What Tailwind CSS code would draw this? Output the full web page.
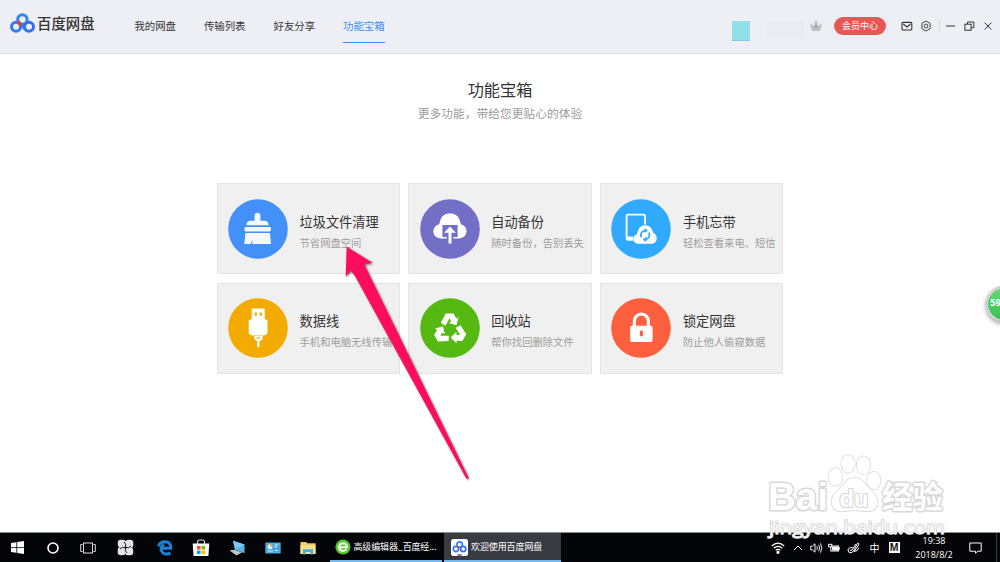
<!DOCTYPE html>
<html lang="zh-CN">
<head>
  <meta charset="UTF-8">
  <title>百度网盘</title>
  <script src="https://cdn.jsdelivr.net/npm/@tailwindcss/browser@4"></script>
</head>
<body class="relative w-[1000px] h-[562px] overflow-hidden bg-white flex flex-col font-['Noto_Sans_CJK_SC',sans-serif]">

  <!-- Header -->
  <header class="h-[54px] shrink-0 flex items-start bg-[#eeeff5] border-b border-[#dcdde1] text-[#333]">
    <div class="flex items-center pl-2.5 pt-3 w-[134px]">
      <svg class="w-[25px] h-[22px]" viewBox="0 0 25 22" fill="none" stroke-width="3">
        <circle cx="12.4" cy="7.5" r="4.7" stroke="#2f86f8"/>
        <circle cx="6" cy="14.8" r="4.5" stroke="#2f7bf7"/>
        <circle cx="19" cy="14.8" r="4.5" stroke="#2f6ff7"/>
        <path d="M9.5 11 L15.7 17.8" stroke="#2f7bf7"/>
        <path d="M7.6 9 L11.4 13.4" stroke="#d8403f"/>
      </svg>
      <span class="ml-0.5 text-[14.4px] leading-[22px] font-medium">百度网盘</span>
    </div>
    <nav class="flex gap-[28px] text-[10.4px] leading-4 pt-[17.5px] pl-[0.4px]">
      <a class="h-[25px]">我的网盘</a>
      <a class="h-[25px]">传输列表</a>
      <a class="h-[25px]">好友分享</a>
      <a class="h-[25px] text-[#3b8cff] border-b-[1.5px] border-[#3b8cff]">功能宝箱</a>
    </nav>
    <div class="flex ml-auto pr-2">
      <div class="mt-[21px] w-[18px] h-5 bg-[#91dfe9] border-b border-[#7fcbd6]"></div>
      <div class="mt-[21px] ml-[17px] w-[37px] h-[18px] bg-[#ebecf1]"></div>
      <svg class="mt-[19px] ml-1.5 w-3 h-[13px]" viewBox="0 0 12 13" fill="#bcc4c9">
        <path d="M0 4 L3.4 7 L5 3 L6 1 L7 3 L8.6 7 L12 4 L10.6 11.5 Q6 13 1.4 11.5Z"/>
        <path d="M6 5 L7 9 H5Z" fill="#8b969c"/>
      </svg>
      <div class="mt-[17px] ml-3 w-[52px] h-[18px] rounded-full bg-[#e65855] text-white text-[9px] leading-[18px] text-center">会员中心</div>
      <svg class="mt-[21px] ml-[15px] w-3 h-[11px]" viewBox="0 0 12 11" fill="none" stroke="#333" stroke-width="1.1">
        <rect x="1" y="1.4" width="9.8" height="7.6" rx="1"/>
        <path d="M2.3 3 L6 6 L9.6 3"/>
      </svg>
      <svg class="mt-[20px] ml-[7px] w-3 h-3" viewBox="0 0 12 12" fill="none" stroke="#444">
        <path d="M6 1 L10.1 3.4 V8.6 L6 11 L1.9 8.6 V3.4Z" stroke-linejoin="round"/>
        <circle cx="6" cy="6" r="1.9"/>
      </svg>
      <div class="mt-5 ml-[7px] w-px h-3 bg-[#dadbe0]"></div>
      <svg class="mt-[20px] ml-[6px] w-[9px] h-3" viewBox="0 0 9 12" stroke="#444" stroke-width="1.1"><path d="M0 6 H9"/></svg>
      <svg class="mt-[21px] ml-[9px] w-[11px] h-[11px]" viewBox="0 0 11 11" fill="none" stroke="#333">
        <rect x=".9" y="3.2" width="6.2" height="6"/>
        <path d="M3.5 3 V1 H9.8 V6.7 H7.3"/>
      </svg>
      <svg class="mt-[22px] ml-[9px] w-2 h-2" viewBox="0 0 8 8" stroke="#333"><path d="M.7 .7 L7.3 7.5 M7.3 .7 L.7 7.5"/></svg>
    </div>
  </header>

  <!-- Content -->
  <main class="grow flex flex-col items-center pt-[23px]">
    <h1 class="text-[16.2px] leading-6 text-[#333]">功能宝箱</h1>
    <p class="text-[11.75px] leading-5 mt-0.5 text-[#9b9b9b]">更多功能，带给您更贴心的体验</p>

    <div class="grid grid-cols-[repeat(3,183.5px)] gap-x-[8.2px] gap-y-[8.6px] mt-[60px]">
      <div class="flex h-[91px] bg-[#f0f0f0] border border-[#e4e4e4] rounded-[1px] pl-[10.5px] pt-[14.5px] whitespace-nowrap">
        <svg class="w-[60px] h-[60px] shrink-0" viewBox="0 0 60 60" fill="#f4f7fb">
          <circle cx="30" cy="30" r="29.8" fill="#4490f9"/>
          <path d="M26.6 16.7 a2.9 2.9 0 0 1 5.8 0 V21.7 H37 Q40.4 22 40.6 26.2 H18.4 Q18.6 22 22 21.7 H26.6Z"/>
          <rect x="16.4" y="28.1" width="26.6" height="4.4" rx="1.4"/>
          <path d="M17.4 34 H42 L43 45 H24.2 L24.6 40.5 L22.7 45 H16.3Z"/>
        </svg>
        <div class="ml-[11.5px] pt-[13px]">
          <h2 class="text-[13.2px] leading-5 text-[#333]">垃圾文件清理</h2>
          <p class="text-[10.3px] leading-4 mt-[3px] text-[#9d9d9d]">节省网盘空间</p>
        </div>
      </div>

      <div class="flex h-[91px] bg-[#f0f0f0] border border-[#e4e4e4] rounded-[1px] pl-[10.5px] pt-[14.5px] whitespace-nowrap">
        <svg class="w-[60px] h-[60px] shrink-0" viewBox="0 0 60 60" fill="#fff">
          <circle cx="30" cy="30" r="29.8" fill="#736fc6"/>
          <path d="M20.5 39.4 Q13.3 38.5 13.3 32 Q13.6 27 19.2 25.2 Q20.8 14.3 30 14.3 Q39.2 14.3 40.8 25.2 Q46.4 27 46.6 32 Q46.4 38.5 39.5 39.4Z"/>
          <path d="M22.4 26 H37.6 V38 H33.4 V41 H26.6 V38 H22.4Z" fill="#736fc6"/>
          <path d="M30 27.6 L36 33.8 H31.5 V44.4 H28.5 V33.8 H24Z"/>
        </svg>
        <div class="ml-[11.5px] pt-[13px]">
          <h2 class="text-[13.2px] leading-5 text-[#333]">自动备份</h2>
          <p class="text-[10.3px] leading-4 mt-[3px] text-[#9d9d9d]">随时备份，告别丢失</p>
        </div>
      </div>

      <div class="flex h-[91px] bg-[#f0f0f0] border border-[#e4e4e4] rounded-[1px] pl-[10.5px] pt-[14.5px] whitespace-nowrap">
        <svg class="w-[60px] h-[60px] shrink-0" viewBox="0 0 60 60" fill="#fff">
          <circle cx="30" cy="30" r="29.8" fill="#30a9fe"/>
          <path fill-rule="evenodd" d="M17 14.7 H32.6 Q35 14.7 35 17 V25.5 H33.2 V16.6 H16.5 V37.4 H22 V41.8 H17 Q14.7 41.8 14.7 39.5 V17 Q14.7 14.7 17 14.7Z"/>
          <path d="M26.5 44.8 Q22.2 44 22.3 39.6 Q22.6 36.5 25.9 35.3 Q27.2 26.2 34.5 26.2 Q40.4 26.4 42 33.4 Q45.9 35.6 45.8 39.8 Q45.2 44.3 41 44.8Z"/>
          <g fill="none" stroke="#30a9fe" stroke-width="1.8">
            <path d="M30.4 38.4 Q28.6 32.8 34 31.6"/>
            <path d="M38 33.5 Q39.8 39 34.6 40.4"/>
          </g>
          <path d="M33.4 29 L37 31.4 L33.8 34Z M35.2 37.8 L31.6 40.7 L35.4 43Z" fill="#30a9fe"/>
        </svg>
        <div class="ml-[11.5px] pt-[13px]">
          <h2 class="text-[13.2px] leading-5 text-[#333]">手机忘带</h2>
          <p class="text-[10.3px] leading-4 mt-[3px] text-[#9d9d9d]">轻松查看来电、短信</p>
        </div>
      </div>

      <div class="flex h-[91px] bg-[#f0f0f0] border border-[#e4e4e4] rounded-[1px] pl-[10.5px] pt-[14px] whitespace-nowrap">
        <svg class="w-[60px] h-[60px] shrink-0" viewBox="0 0 60 60" fill="#fff">
          <circle cx="30" cy="30" r="29.8" fill="#f3ab02"/>
          <path fill-rule="evenodd" d="M24.5 10.4 H36 Q36.7 10.4 36.7 11.2 V21.4 H38 Q39.5 21.4 39.5 23 V35.5 L36.5 37.6 H23.7 L20.7 35.5 V23 Q20.7 21.4 22.2 21.4 H23.7 V11.2 Q23.7 10.4 24.5 10.4Z M26.7 14.5 V17.8 H28.9 V14.5Z M31.7 14.5 V17.8 H33.9 V14.5Z"/>
          <path fill-rule="evenodd" d="M26.2 38 H34.6 V41 L32.6 42.8 H31.5 V48.8 Q30.4 50.4 29.3 48.8 V42.8 H28.2 L26.2 41Z M28.6 39.3 V40.6 H32.2 V39.3Z"/>
        </svg>
        <div class="ml-[11.5px] pt-[13.5px]">
          <h2 class="text-[13.2px] leading-5 text-[#333]">数据线</h2>
          <p class="text-[10.3px] leading-4 mt-[3px] text-[#9d9d9d]">手机和电脑无线传输</p>
        </div>
      </div>

      <div class="flex h-[91px] bg-[#f0f0f0] border border-[#e4e4e4] rounded-[1px] pl-[10.5px] pt-[14px] whitespace-nowrap">
        <svg class="w-[60px] h-[60px] shrink-0" viewBox="0 0 60 60" fill="#fff">
          <circle cx="30" cy="30" r="29.8" fill="#56b912"/>
          <path d="M20.9 24.8 L25.7 15.4 H33.6 L36.2 20.4 L38.6 19.3 L36.4 27.3 L28.8 25 L31.3 23.4 L29.6 20.3 L25.4 27.8Z"/>
          <path transform="rotate(120 30 31.7)" d="M20.9 24.8 L25.7 15.4 H33.6 L36.2 20.4 L38.6 19.3 L36.4 27.3 L28.8 25 L31.3 23.4 L29.6 20.3 L25.4 27.8Z"/>
          <path transform="rotate(240 30 31.7)" d="M20.9 24.8 L25.7 15.4 H33.6 L36.2 20.4 L38.6 19.3 L36.4 27.3 L28.8 25 L31.3 23.4 L29.6 20.3 L25.4 27.8Z"/>
        </svg>
        <div class="ml-[11.5px] pt-[13.5px]">
          <h2 class="text-[13.2px] leading-5 text-[#333]">回收站</h2>
          <p class="text-[10.3px] leading-4 mt-[3px] text-[#9d9d9d]">帮你找回删除文件</p>
        </div>
      </div>

      <div class="flex h-[91px] bg-[#f0f0f0] border border-[#e4e4e4] rounded-[1px] pl-[10.5px] pt-[14px] whitespace-nowrap">
        <svg class="w-[60px] h-[60px] shrink-0" viewBox="0 0 60 60" fill="#fff">
          <circle cx="30" cy="30" r="29.8" fill="#fe603f"/>
          <path d="M23.4 29 V23 a7 7 0 0 1 14 0 V29" fill="none" stroke="#fff" stroke-width="3.2"/>
          <rect x="19.2" y="27.7" width="22.4" height="16.2" rx="2"/>
          <rect x="28.8" y="32.4" width="3.2" height="6" rx="1.4" fill="#fe603f"/>
        </svg>
        <div class="ml-[11.5px] pt-[13.5px]">
          <h2 class="text-[13.2px] leading-5 text-[#333]">锁定网盘</h2>
          <p class="text-[10.3px] leading-4 mt-[3px] text-[#9d9d9d]">防止他人偷窥数据</p>
        </div>
      </div>
    </div>
  </main>

  <!-- Taskbar -->
  <footer class="h-[30px] shrink-0 flex bg-[#030508] border-t border-[#8a8b8d] text-white">
    <div class="grid grid-cols-[35px_35px_35px_40px_40px_31px_42px_29px_42.5px] items-center justify-items-center">
      <svg class="w-[13px] h-[13px]" viewBox="0 0 13 13" fill="#fff"><path d="M0 2 L5.4 1.2 V6 H0Z M6.2 1 L13 0 V6 H6.2Z M0 6.8 H5.4 V11.8 L0 11Z M6.2 6.8 H13 V13 L6.2 12Z"/></svg>
      <svg class="w-3 h-3" viewBox="0 0 12 12" fill="none" stroke="#fff" stroke-width="1.6"><circle cx="6" cy="6" r="5"/></svg>
      <svg class="w-4 h-3" viewBox="0 0 16 12" fill="none" stroke="#ddd"><rect x="3.5" y="1" width="9" height="10"/><path d="M2.5 2.5 H.7 V9.5 H2.5 M13.5 2.5 H15.3 V9.5 H13.5"/></svg>
      <svg class="w-[17px] h-[17px]" viewBox="0 0 17 17" fill="#e4e4e4">
        <rect x=".8" y=".7" width="8.2" height="7.8" rx="3"/>
        <rect x="8.5" y=".8" width="7.8" height="8.2" rx="3"/>
        <rect x="8" y="8.5" width="8.2" height="7.8" rx="3"/>
        <rect x=".7" y="8" width="7.8" height="8.2" rx="3"/>
        <path d="M8.5 8.5 Q9.6 5 7 3 M8.5 8.5 Q12 9.6 14 7 M8.5 8.5 Q7.4 12 10 14 M8.5 8.5 Q5 7.4 3 10" fill="none" stroke="#15171a" stroke-width="1"/>
      </svg>
      <svg class="w-4 h-4" viewBox="0 0 16 16" fill="none" stroke="#1683d8" stroke-width="3">
        <path d="M4.2 8.2 H13.7 Q14 2 8.2 1.8 Q3 1.8 1.3 6.2"/>
        <path d="M7 4.6 Q3.4 7 4.3 10.5 Q6.4 16 13.5 13"/>
      </svg>
      <svg class="w-[18px] h-[18px]" viewBox="0 0 18 18">
        <path d="M5.5 5 V3 Q5.5 1 7.5 1 H10.5 Q12.5 1 12.5 3 V5" fill="none" stroke="#ddd" stroke-width="1.1"/>
        <path d="M.7 4.6 H17.3 L16.4 17 H1.6Z" fill="#fff"/>
        <path d="M5 7 H8.5 V10.5 H5Z" fill="#f25022"/><path d="M9.5 7 H13 V10.5 H9.5Z" fill="#7fba00"/>
        <path d="M5 11.5 H8.5 V15 H5Z" fill="#00a4ef"/><path d="M9.5 11.5 H13 V15 H9.5Z" fill="#ffb900"/>
      </svg>
      <svg class="w-[17px] h-4" viewBox="0 0 17 16">
        <path d="M4 .8 L15.5 4.6 V13.2 L6 9.6Z" fill="#58b5ec"/>
        <path d="M4 .8 L15.5 4.6 L6 9.6Z" fill="#79caf5"/>
        <path d="M.5 10.6 L5.5 9.8 L13 12.4 L7.5 15.3Z" fill="#d9e3e8"/>
        <path d="M2 11 L10 14 M4 10.4 L12 13" stroke="#8897a0" stroke-width=".6"/>
      </svg>
      <svg class="w-4 h-3" viewBox="0 0 16 12">
        <rect x=".4" y=".6" width="15.2" height="10.8" fill="#5bbcf0"/>
        <rect x="1.4" y="1.6" width="13.2" height="8.8" fill="#3ea3e3"/>
        <circle cx="5" cy="4.7" r="2.5" fill="#e8f5fc"/><path d="M5 4.7 V2.2 A2.5 2.5 0 0 1 7.5 4.7Z" fill="#f4a62a"/>
        <path d="M9.5 3 H13 M9.5 5 H12 M2.5 9 H8 M10 8.5 H13" stroke="#dff2fc"/>
      </svg>
      <svg class="w-4 h-[14px]" viewBox="0 0 16 14">
        <path d="M.5 1 H6 L7.5 2.3 H15.5 V13 H.5Z" fill="#f4cd62"/>
        <path d="M.5 4 H15.5 V13 H.5Z" fill="#fbe08c"/>
        <path d="M3 13.4 V8.3 H13 V13.4 H10.4 V11 H5.6 V13.4Z" fill="#46aee6"/>
      </svg>
    </div>
    <div class="w-[112px] flex items-center border-b-2 border-b-[#76b9ed] pt-px pl-[5px] text-[9px] whitespace-nowrap">
      <svg class="w-[16px] h-[16px] shrink-0" viewBox="0 0 16 16">
        <circle cx="8" cy="8" r="7.6" fill="#5cc331"/>
        <path d="M3.4 8.2 H12 Q11.8 4.3 8 4.2 Q4.2 4.4 4 8.2 Q4.3 11.8 8 11.9 Q10.4 11.8 11.6 10.2" fill="none" stroke="#f3fcef" stroke-width="2"/>
      </svg>
      <span class="ml-[3px] tracking-[-0.15px]">高级编辑器_百度经...</span>
    </div>
    <div class="w-[117px] ml-[2.5px] flex items-center bg-[#383b41] border-b-2 border-b-[#76b9ed] pt-px pl-[7px] text-[9px] whitespace-nowrap">
      <svg class="w-[17px] h-[17px] shrink-0" viewBox="0 0 17 17" fill="none" stroke-width="1.7">
        <rect width="17" height="17" rx="2.5" fill="#fff"/>
        <circle cx="8.6" cy="5.6" r="2.8" stroke="#2f86f8"/>
        <circle cx="4.9" cy="10" r="2.6" stroke="#2f7bf7"/>
        <circle cx="12.2" cy="10" r="2.6" stroke="#2f6ff7"/>
        <path d="M6 7 L8 9.6" stroke="#e0403f"/>
        <path d="M6.3 16 H9" stroke="#e0403f"/><path d="M9 16 H11" stroke="#2f7bf7"/>
      </svg>
      <span class="ml-[3px] tracking-[-0.1px]">欢迎使用百度网盘</span>
    </div>
    <div class="ml-auto grid grid-cols-[20px_19px_18px_17px_23px_19px_20px_60px_22px_14px] items-center justify-items-center">
      <svg class="w-[14px] h-3" viewBox="0 0 14 12" fill="none" stroke="#fff" stroke-width="1.2">
        <path d="M.8 4 Q7 -1.6 13.2 4 M2.8 6.2 Q7 2.4 11.2 6.2 M4.7 8.4 Q7 6.3 9.3 8.4"/><circle cx="7" cy="10.3" r="1" fill="#fff"/>
      </svg>
      <svg class="w-[10px] h-2" viewBox="0 0 10 8" fill="none" stroke="#fff"><path d="M1 6 L5 2 L9 6"/></svg>
      <svg class="w-[13px] h-3" viewBox="0 0 13 12" fill="none" stroke="#eee" stroke-width="1">
        <path d="M.7 4.2 H2.4 L5 1.8 V10.2 L2.4 7.8 H.7Z M6.8 4.2 Q8 6 6.8 7.8 M8.7 2.8 Q10.7 6 8.7 9.2 M10.4 1.3 Q13.4 6 10.4 10.7"/>
      </svg>
      <svg class="w-3 h-[10px]" viewBox="0 0 12 10" fill="none" stroke="#fff">
        <rect x="2.8" y="3" width="7.8" height="5"/><path d="M4.5 4 H10 V7 H4.5Z" fill="#fff"/><path d="M11.6 4.5 V6.5"/><rect x=".6" y="1.3" width="3.2" height="2.5" fill="#030508"/>
      </svg>
      <svg class="w-[13px] h-3" viewBox="0 0 13 12" fill="none" stroke="#fff" stroke-width="1">
        <path d="M5.6 5.5 Q1 5.6 1 8 Q1.3 11.2 4 10.8 Q6.2 10 7.3 7.5 L10.4 1.3 Q12.4 .7 11.8 2.8 L7 9.5 Q10.4 9.7 12 5.7 M3 8.5 L5 8 L9 2"/>
      </svg>
      <span class="text-[10px] leading-4">中</span>
      <span class="w-[11px] h-[11px] bg-white text-[#111] font-['Liberation_Sans',sans-serif] text-[10.5px] leading-[11px] font-bold text-center">M</span>
      <div class="font-['Open_Sans',sans-serif] text-[9px] leading-[13.6px] text-center">
        <div>19:38</div>
        <div>2018/8/2</div>
      </div>
      <svg class="w-[13px] h-3" viewBox="0 0 13 12" fill="none" stroke="#fff"><path d="M.8 1 H12.2 V9.2 H8.6 L6.5 11.3 V9.2 H.8Z"/></svg>
      <div class="justify-self-end mr-[3px] w-px h-full bg-[#3c3e42]"></div>
    </div>
  </footer>

  <!-- Pointer arrow, watermark and floating ball -->
  <svg class="absolute inset-0 w-[1000px] h-[562px] pointer-events-none" viewBox="0 0 1000 562">
    <path class="drop-shadow-[1px_1.5px_1px_rgba(0,0,0,0.55)]" d="M346.7 246.7 L372.5 262.7 L364.5 264.2 Q366 268 368 272 L468.6 477.8 Q467.6 479.4 466.2 478.2 L355 276 L350.8 270.5 L345.7 276.7Z" fill="#fe0d5c"/>
    <g fill="#fff" stroke="#d8d8d8" stroke-width="1.5" stroke-linejoin="round" paint-order="stroke">
      <ellipse cx="835.3" cy="477" rx="7" ry="9"/>
      <ellipse cx="848" cy="464" rx="6.8" ry="9"/>
      <ellipse cx="863.5" cy="465.3" rx="6.8" ry="9"/>
      <ellipse cx="873.7" cy="480.6" rx="6.8" ry="8.8"/>
      <path d="M854.5 478 C863.5 478 865 485 871 490 C881 498 879.5 511.5 868 511.3 C862 511.3 859 510.3 854.5 510.3 C850 510.3 848 511.3 841.5 511.3 C829.5 511.5 828.5 498 838 490 C844 485 845.5 478 854.5 478Z"/>
      <g stroke-width="3" font-weight="bold">
        <text x="768" y="510" font-size="39" textLength="60" lengthAdjust="spacingAndGlyphs" font-family="Liberation Sans, sans-serif">Bai</text>
        <text x="882" y="507.5" font-size="31" textLength="61" lengthAdjust="spacingAndGlyphs">经验</text>
      </g>
      <text x="839.5" y="507" font-size="24" font-weight="bold" stroke-width="2.2" textLength="29" lengthAdjust="spacingAndGlyphs" font-family="Liberation Sans, sans-serif">du</text>
      <text x="769" y="533.5" font-size="19" textLength="176" lengthAdjust="spacingAndGlyphs" font-family="Open Sans, sans-serif" fill="#f6f6f6" stroke="#d4d4d4">jingyan.baidu.com</text>
    </g>
  </svg>
  <div class="absolute left-[986px] top-[286px] w-[36px] h-[36px] rounded-full border-2 border-[#e3e3e3] outline outline-[#bdbdbd] -outline-offset-1 bg-linear-to-b from-[#6ad77c] to-[#2fc24a] shadow-[0_2px_5px_rgba(0,0,0,0.4)] text-white text-[8px] leading-[31px] font-bold pl-[2px] font-['DejaVu_Sans',sans-serif]">59%</div>
</body>
</html>
